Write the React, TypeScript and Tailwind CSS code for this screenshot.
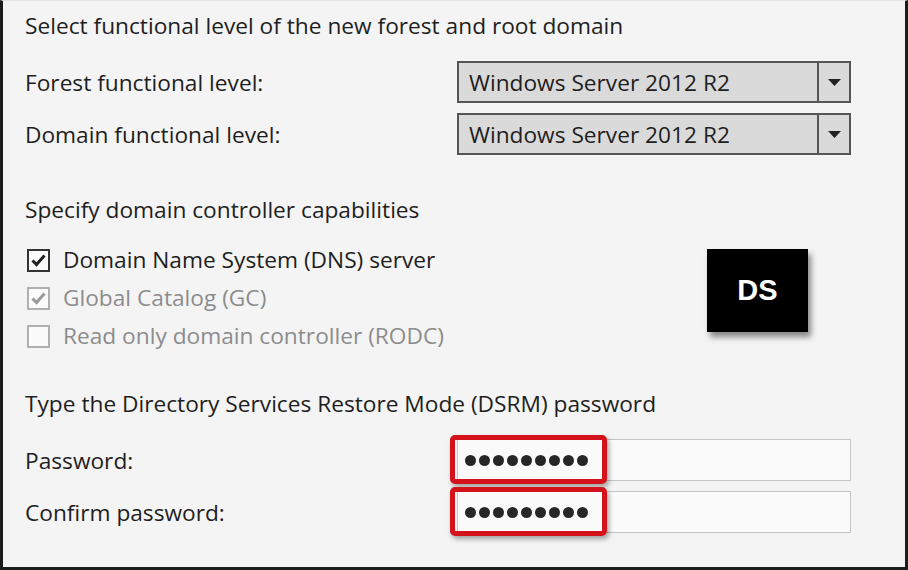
import React from "react";

const font = { fontFamily: '"Open Sans", "Noto Sans", sans-serif' };

function Dropdown() {
  return (
    <div className="flex h-[42px] w-[394px] border-2 border-[#555555] bg-[#dadada]">
      <div className="flex flex-1 items-center pl-[10px] pt-[2px] text-[22.7px] text-[#1e1e1e]">Windows Server 2012 R2</div>
      <div className="flex w-[32px] items-center justify-center border-l-2 border-[#555555]">
        <svg width="13" height="7" viewBox="0 0 13 7"><path d="M0 0h13L6.5 7z" fill="#222" /></svg>
      </div>
    </div>
  );
}

function Check({ state }: { state: "on" | "dis-on" | "dis-off" }) {
  const border = state === "on" ? "border-[#333333]" : "border-[#b0b0b0]";
  const stroke = state === "on" ? "#222" : "#9a9a9a";
  return (
    <div className={`flex h-[23px] w-[23px] items-center justify-center border-2 bg-[#fbfbfb] ${border}`}>
      {state !== "dis-off" && (
        <svg width="15" height="13" viewBox="0 0 15 13">
          <path d="M1.5 6.5L5.5 10.5L13.5 1.5" stroke={stroke} strokeWidth="3" fill="none" />
        </svg>
      )}
    </div>
  );
}

function Dots() {
  return (
    <div className="flex gap-[3px]">
      {Array.from({ length: 9 }).map((_, i) => (
        <div key={i} className="h-[11px] w-[11px] rounded-full bg-[#262626]" />
      ))}
    </div>
  );
}

function PwInput() {
  return (
    <div className="relative flex h-[42px] w-[394px] items-center border border-[#c4c4c4] bg-[#fafafa] pl-[7px]">
      <Dots />
      <div className="absolute left-[-8px] top-[-5px] h-[49px] w-[157px] rounded-[5px] border-[5px] border-[#d3121b] shadow-[2px_3px_5px_rgba(0,0,0,0.35)]" />
    </div>
  );
}

export default function App() {
  return (
    <div
      className="relative box-border h-[570px] w-[908px] overflow-hidden border-x-[3px] border-b-[3px] border-t border-x-[#1c1c1c] border-b-[#1c1c1c] border-t-[#e2e2e2] bg-[#f4f4f4] text-[22.7px] text-[#1e1e1e]"
      style={font}
    >
      <div className="flex flex-col pl-[22px]">
        <div className="flex h-[49px] items-center pt-[2px]">Select functional level of the new forest and root domain</div>
        <div className="mt-[11px] flex h-[42px] items-center">
          <div className="w-[432px] pt-[2px]">Forest functional level:</div>
          <Dropdown />
        </div>
        <div className="mt-[10px] flex h-[42px] items-center">
          <div className="w-[432px] pt-[2px]">Domain functional level:</div>
          <Dropdown />
        </div>
        <div className="mt-[35px] flex h-[40px] items-center pt-[1px]">Specify domain controller capabilities</div>
        <div className="mt-[11px] flex h-[38px] items-center gap-[13px] pl-[2px]">
          <Check state="on" />
          <span className="pt-[1px]">Domain Name System (DNS) server</span>
        </div>
        <div className="flex h-[38px] items-center gap-[13px] pl-[2px] text-[#8c8c8c]">
          <Check state="dis-on" />
          <span className="pt-[1px]">Global Catalog (GC)</span>
        </div>
        <div className="flex h-[38px] items-center gap-[13px] pl-[2px] text-[#8c8c8c]">
          <Check state="dis-off" />
          <span className="pt-[1px]">Read only domain controller (RODC)</span>
        </div>
        <div className="mt-[29px] flex h-[40px] items-center pt-[1px]">Type the Directory Services Restore Mode (DSRM) password</div>
        <div className="mt-[15px] flex h-[42px] items-center">
          <div className="w-[432px] pt-[2px]">Password:</div>
          <PwInput />
        </div>
        <div className="mt-[10px] flex h-[42px] items-center">
          <div className="w-[432px] pt-[2px]">Confirm password:</div>
          <PwInput />
        </div>
      </div>
      <div
        className="absolute left-[704px] top-[248px] flex h-[83px] w-[101px] items-center justify-center bg-black text-[29px] font-bold text-white shadow-[3px_5px_6px_rgba(0,0,0,0.45)]"
        style={{ fontFamily: '"Liberation Sans", Arial, sans-serif' }}
      >
        DS
      </div>
    </div>
  );
}
